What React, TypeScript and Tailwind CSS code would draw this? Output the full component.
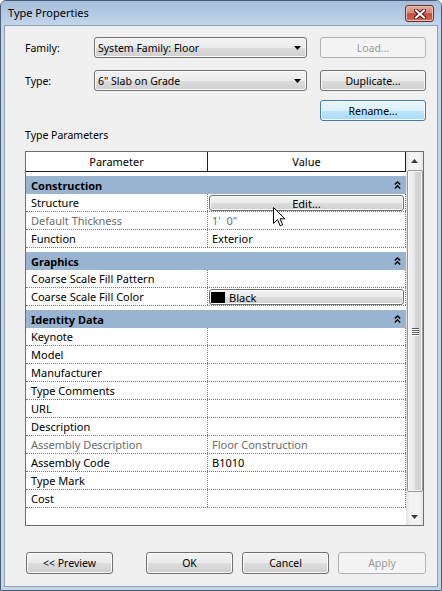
import React from 'react';

type Row = { name: string; value?: string; gray?: boolean; kind?: 'edit' | 'color' };

const groups: { title: string; rows: Row[] }[] = [
  {
    title: 'Construction',
    rows: [
      { name: 'Structure', kind: 'edit' },
      { name: 'Default Thickness', value: "1'\u00a0\u00a00\"", gray: true },
      { name: 'Function', value: 'Exterior' },
    ],
  },
  {
    title: 'Graphics',
    rows: [
      { name: 'Coarse Scale Fill Pattern' },
      { name: 'Coarse Scale Fill Color', kind: 'color' },
    ],
  },
  {
    title: 'Identity Data',
    rows: [
      { name: 'Keynote' },
      { name: 'Model' },
      { name: 'Manufacturer' },
      { name: 'Type Comments' },
      { name: 'URL' },
      { name: 'Description' },
      { name: 'Assembly Description', value: 'Floor Construction', gray: true },
      { name: 'Assembly Code', value: 'B1010' },
      { name: 'Type Mark' },
      { name: 'Cost' },
    ],
  },
];

const btnNormal =
  'rounded-[3px] border border-[#707070] bg-[linear-gradient(to_bottom,#f2f2f2_0%,#ebebeb_50%,#dddddd_51%,#cfcfcf_100%)] shadow-[inset_0_0_0_1px_#fbfbfb] text-black';
const btnHot =
  'rounded-[3px] border border-[#3c7fb1] bg-[linear-gradient(to_bottom,#eaf6fd_0%,#d9f0fc_50%,#bee6fd_51%,#a7d9f5_100%)] shadow-[inset_0_0_0_1px_#fbfbfb] text-black';
const btnDisabled = 'rounded-[3px] border border-[#adb2b5] bg-[#f4f4f4] text-[#9a9a9a]';

function Chevrons() {
  return (
    <svg width="7" height="8" viewBox="0 0 7 8" className="block">
      <path d="M0.8 3.6 L3.5 1 L6.2 3.6" fill="none" stroke="#000" strokeWidth="1.4" />
      <path d="M0.8 7.4 L3.5 4.8 L6.2 7.4" fill="none" stroke="#000" strokeWidth="1.4" />
    </svg>
  );
}

function Combo({ text }: { text: string }) {
  return (
    <div className={`w-[213px] h-[21px] flex items-center pl-[3px] pr-[5px] ${btnNormal}`}>
      <span className="flex-1 text-[10.5px] leading-[14px] whitespace-nowrap">{text}</span>
      <svg width="7" height="4" viewBox="0 0 7 4" className="block">
        <path d="M0 0 L7 0 L3.5 4 Z" fill="#000" />
      </svg>
    </div>
  );
}

function GridRow({ row }: { row: Row }) {
  return (
    <div className="h-[18px] flex border-b border-dotted border-[#7a7a7a]">
      <div
        className={`w-[182px] shrink-0 flex items-center pl-[5px] border-r border-dotted border-[#7a7a7a] whitespace-nowrap ${
          row.gray ? 'text-[#6d6d6d]' : 'text-black'
        }`}
      >
        {row.name}
      </div>
      <div className="flex-1 flex border-r border-dotted border-[#7a7a7a]">
        {row.kind === 'edit' ? (
          <div className={`mt-[1px] mx-[1px] h-[16px] flex-1 flex items-center justify-center ${btnNormal}`}>
            Edit...
          </div>
        ) : row.kind === 'color' ? (
          <div className={`mt-[1px] mx-[1px] h-[16px] flex-1 flex items-center ${btnNormal}`}>
            <div className="ml-[1px] w-[14px] h-[11px] bg-black" />
            <span className="ml-[4px]">Black</span>
          </div>
        ) : (
          <div
            className={`flex items-center pl-[4px] whitespace-nowrap ${row.gray ? 'text-[#6d6d6d]' : 'text-black'}`}
          >
            {row.value ?? ''}
          </div>
        )}
      </div>
    </div>
  );
}

function Band({ title }: { title: string }) {
  return (
    <div className="mt-[4px] h-[18px] flex items-center pl-[5px] pr-[5px] bg-[#99b4d1]">
      <span className="font-bold flex-1">{title}</span>
      <Chevrons />
    </div>
  );
}

function Scrollbar() {
  return (
    <div className="w-[17px] shrink-0 flex flex-col bg-[linear-gradient(to_right,#e3e3e3,#f2f2f2_25%,#f2f2f2_75%,#e6e6e6)]">
      <div className="h-[17px] flex items-center justify-center">
        <svg width="7" height="4" viewBox="0 0 7 4" className="block">
          <path d="M3.5 0 L7 4 L0 4 Z" fill="#3a3a3a" />
        </svg>
      </div>
      <div className="mt-[1px] ml-[1px] mr-[0px] h-[322px] rounded-[2px] border border-[#979797] bg-[linear-gradient(to_right,#f3f3f3,#e8e8e8_45%,#d6d6d6_55%,#cdcdcd)] shadow-[inset_0_0_0_1px_#f8f8f8] flex items-center justify-center">
        <div className="flex flex-col gap-[1px]">
          <div className="w-[7px] h-[1px] bg-[#5a5a5a] shadow-[0_1px_0_#ffffff]" />
          <div className="w-[7px] h-[1px] bg-[#5a5a5a] shadow-[0_1px_0_#ffffff]" />
          <div className="w-[7px] h-[1px] bg-[#5a5a5a] shadow-[0_1px_0_#ffffff]" />
          <div className="w-[7px] h-[1px] bg-[#5a5a5a] shadow-[0_1px_0_#ffffff]" />
        </div>
      </div>
      <div className="flex-1" />
      <div className="h-[17px] flex items-center justify-center">
        <svg width="7" height="4" viewBox="0 0 7 4" className="block">
          <path d="M0 0 L7 0 L3.5 4 Z" fill="#3a3a3a" />
        </svg>
      </div>
    </div>
  );
}

export default function App() {
  return (
    <div className="relative w-[442px] h-[591px] flex flex-col overflow-hidden rounded-t-[6px] border border-[#4b5d72] bg-[#c1d4ea] font-['Noto_Sans',sans-serif] text-black">
      {/* Title bar */}
      <div className="h-[24px] shrink-0 flex items-start bg-[linear-gradient(to_bottom,#a4bedb,#c2d5eb)]">
        <span className="pl-[7px] pt-[5px] text-[11px] leading-[14px]">Type Properties</span>
        <div className="ml-auto mt-[4px] mr-[7px] w-[29px] h-[17px] rounded-[3px] border border-[#6b2c25] bg-[linear-gradient(to_bottom,#e6a99b_0%,#d98676_45%,#c4473a_52%,#d06a58_100%)] shadow-[inset_0_0_0_1px_#f0c3b8] flex items-center justify-center">
          <svg width="12" height="10" viewBox="0 0 12 10" className="block">
            <path d="M2 1.5 L10 8.5 M10 1.5 L2 8.5" stroke="#4a1a15" strokeWidth="4" strokeLinecap="square" />
            <path d="M2 1.5 L10 8.5 M10 1.5 L2 8.5" stroke="#ffffff" strokeWidth="2" strokeLinecap="square" />
          </svg>
        </div>
      </div>

      {/* Body frame */}
      <div className="flex-1 flex px-[3px] pb-[3px]">
        <div className="flex-1 flex flex-col border border-[#8aa0b8] bg-[#f0f0f0]">
          {/* Family row */}
          <div className="mt-[11px] ml-[20px] h-[21px] flex items-center text-[10.5px]">
            <span className="w-[69px] leading-[14px]">Family:</span>
            <Combo text="System Family: Floor" />
            <div className={`ml-[13px] w-[106px] h-[21px] flex items-center justify-center leading-[14px] ${btnDisabled}`}>
              Load...
            </div>
          </div>
          {/* Type row */}
          <div className="mt-[12px] ml-[20px] h-[21px] flex items-center text-[10.5px]">
            <span className="w-[69px] leading-[14px]">Type:</span>
            <Combo text={'6" Slab on Grade'} />
            <div className={`ml-[13px] w-[106px] h-[21px] flex items-center justify-center leading-[14px] ${btnNormal}`}>
              Duplicate...
            </div>
          </div>
          {/* Rename row */}
          <div className="mt-[9px] ml-[315px] h-[21px] flex text-[10.5px]">
            <div className={`w-[106px] h-[21px] flex items-center justify-center leading-[14px] ${btnHot}`}>
              Rename...
            </div>
          </div>

          <div className="mt-[6px] ml-[20px] text-[10.5px] leading-[16px]">Type Parameters</div>

          {/* Grid */}
          <div className="mt-[8px] ml-[20px] w-[399px] h-[375px] shrink-0 flex border border-[#6e6e6e] bg-white text-[11px] leading-[15px]">
            <div className="w-[380px] shrink-0 flex flex-col">
              <div className="h-[20px] flex border-b border-[#1e1e1e]">
                <div className="w-[182px] shrink-0 flex items-center justify-center border-r border-[#1e1e1e]">
                  Parameter
                </div>
                <div className="flex-1 flex items-center justify-center border-r border-[#1e1e1e]">Value</div>
              </div>
              {groups.map((g) => (
                <React.Fragment key={g.title}>
                  <Band title={g.title} />
                  {g.rows.map((r) => (
                    <GridRow key={r.name} row={r} />
                  ))}
                </React.Fragment>
              ))}
            </div>
            <Scrollbar />
          </div>

          {/* Bottom buttons */}
          <div className="mt-[26px] ml-[21px] h-[22px] flex text-[10.5px] leading-[14px]">
            <div className={`w-[87px] h-[22px] flex items-center justify-center ${btnNormal}`}>&lt;&lt; Preview</div>
            <div className={`ml-[33px] w-[87px] h-[22px] flex items-center justify-center ${btnNormal}`}>OK</div>
            <div className={`ml-[9px] w-[87px] h-[22px] flex items-center justify-center ${btnNormal}`}>Cancel</div>
            <div className={`ml-[9px] w-[88px] h-[22px] flex items-center justify-center ${btnDisabled}`}>Apply</div>
          </div>
        </div>
      </div>

      {/* Mouse cursor */}
      <svg
        width="13"
        height="20"
        viewBox="0 0 13 20"
        className="absolute left-[272px] top-[206px] block pointer-events-none"
      >
        <path
          d="M0.5 0.5 L0.5 16.5 L4.5 12.7 L7.2 18.8 L9.6 17.8 L7 11.8 L12 11.8 Z"
          fill="#ffffff"
          stroke="#000000"
          strokeWidth="1"
          strokeLinejoin="miter"
        />
      </svg>
    </div>
  );
}
